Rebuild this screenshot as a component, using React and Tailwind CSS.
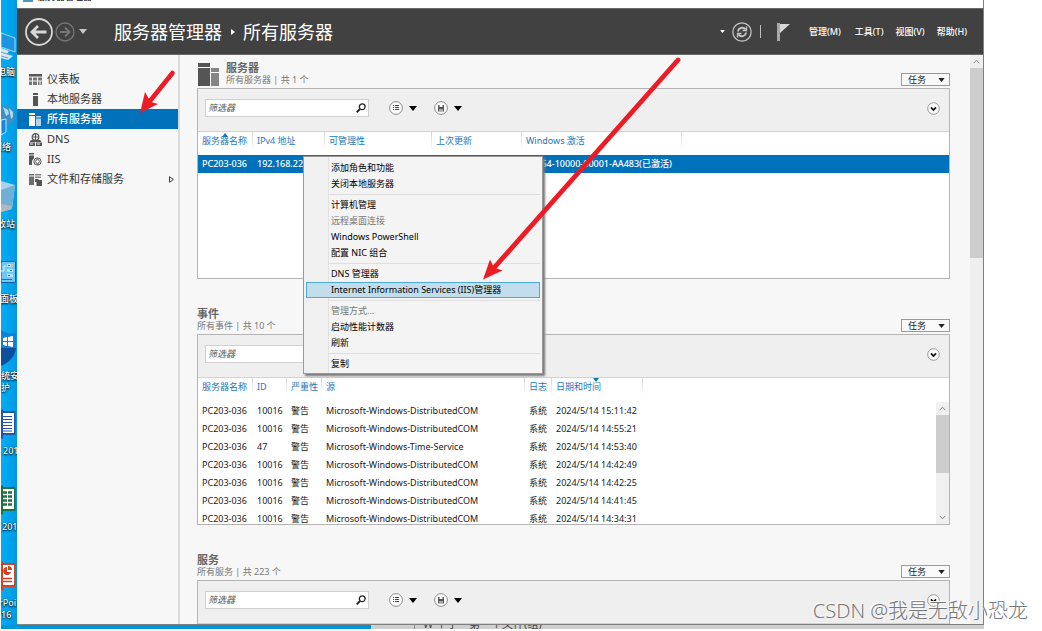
import React from "react";

const events = [
  ["10016", "Microsoft-Windows-DistributedCOM", "15:11:42"],
  ["10016", "Microsoft-Windows-DistributedCOM", "14:55:21"],
  ["47", "Microsoft-Windows-Time-Service", "14:53:40"],
  ["10016", "Microsoft-Windows-DistributedCOM", "14:42:49"],
  ["10016", "Microsoft-Windows-DistributedCOM", "14:42:25"],
  ["10016", "Microsoft-Windows-DistributedCOM", "14:41:45"],
  ["10016", "Microsoft-Windows-DistributedCOM", "14:34:31"],
];

function Caret({ className = "h-[5px] w-2" }) {
  return (
    <svg viewBox="0 0 8 5" className={className} fill="currentColor" aria-hidden="true">
      <path d="M0 0h8L4 5z" />
    </svg>
  );
}

/* ---------- desktop behind the window ---------- */

function DesktopLabel({ className, children }) {
  return (
    <span
      className={`absolute whitespace-nowrap text-[9px] leading-3 font-medium text-white [text-shadow:0_1px_2px_#000,0_0_1px_#000] ${className}`}
    >
      {children}
    </span>
  );
}

function OfficeIcon({ className, color, children }) {
  return (
    <svg viewBox="0 0 15 32" className={`absolute left-0 h-8 w-[15px] ${className}`} aria-hidden="true">
      <path d="M0 3h13.500a1 1 0 0 1 1 1v22a1 1 0 0 1-1 1H0z" fill={color} />
      <path d="M2 5h11v20H2z" fill="#fff" />
      {children}
      <path d="M0 2l2-1v30l-2-1z" fill={color} />
    </svg>
  );
}

function Desktop() {
  return (
    <aside className="relative w-4 shrink-0 overflow-hidden bg-[#00a8f3] bg-linear-to-r from-[#00aef8] to-[#0298e0]">
      <svg viewBox="0 0 15 32" className="absolute top-[31px] left-0 h-8 w-[15px]" aria-hidden="true">
        <path d="M0 2l14 5v14L0 16z" fill="#1b94e4" stroke="#9fdcff" />
        <path d="M0 17l8 3-2 3 6 2-5 4-7-2z" fill="#d6e6ee" />
        <path d="M0 21l9 3M0 25l7 2" stroke="#6fa2c0" />
      </svg>
      <DesktopLabel className="right-[2px] top-[66px]">此电脑</DesktopLabel>
      <svg viewBox="0 0 15 32" className="absolute top-[104px] left-0 h-8 w-[15px]" aria-hidden="true">
        <circle cx="4" cy="12" r="10" fill="#3d8fc4" />
        <path d="M2 3l5 3 1 4-3 2M8 4l4 4v5l-2 2z" fill="#a9dcf2" />
        <path d="M0 16l5-1v13l-5 3z" fill="#1788de" stroke="#b5e4ff" />
      </svg>
      <DesktopLabel className="right-[6px] top-[141px]">网络</DesktopLabel>
      <svg viewBox="0 0 15 32" className="absolute top-[181px] left-0 h-8 w-[15px]" aria-hidden="true">
        <path d="M0 0l14 4-3 24-11 3z" fill="#a5d6ee" />
        <path d="M0 9l14-5-3 24-11 3z" fill="#6fb0d4" />
        <path d="M0 23l11 2-1 3-10 3z" fill="#b4b9bd" />
      </svg>
      <DesktopLabel className="right-[2px] top-[218px]">回收站</DesktopLabel>
      <svg viewBox="0 0 15 23" className="absolute top-[261px] left-0 h-[23px] w-[15px]" aria-hidden="true">
        <path d="M0 .5h14.500v21H0z" fill="#6cc8f8" stroke="#0d5f9f" />
        <path d="M0 10h3V5h2" stroke="#d9f3ff" fill="none" />
        <path d="M6 3h6v3H6zM6 8h6v3H6zM6 13h6v3H6z" fill="#b9e5fb" />
        <path d="M7 4.500h2M9 9.500h2M7 14.500h2M0 18.500h11" stroke="#1b75b8" />
        <path d="M10 3.500h2v2h-2z" fill="#f5a95b" />
      </svg>
      <DesktopLabel className="-right-[1px] top-[293px]">控制面板</DesktopLabel>
      <svg viewBox="0 0 15 36" className="absolute top-[330px] left-0 h-9 w-[15px]" aria-hidden="true">
        <path d="M0 0c4 3 9 4 15 3v15H0z" fill="#0f80d8" />
        <path d="M0 18h15c-1 8-6 14-15 18z" fill="#0c4f9d" />
        <path d="M2 8l4-1v4H2zM7 7l5-1v5H7zM2 12h4v4l-4-1zM7 12h5v5l-5-1z" fill="#fff" />
      </svg>
      <DesktopLabel className="left-0 top-[370px]">统安</DesktopLabel>
      <DesktopLabel className="left-0 top-[382px]">护</DesktopLabel>
      <OfficeIcon className="top-[408px]" color="#2455a4">
        <path d="M2 8.500h9M2 11.500h9M2 14.500h9M2 17.500h9M2 20.500h9M2 23h9" stroke="#2455a4" />
      </OfficeIcon>
      <DesktopLabel className="left-[2px] top-[445px]">2016</DesktopLabel>
      <OfficeIcon className="top-[484px]" color="#1d7044">
        <path d="M2 8.500h4M2 12.500h4M2 16.500h4M2 20.500h4M7 8.500h4M7 12.500h4M7 16.500h4M7 20.500h4" stroke="#1d7044" strokeWidth="2.500" />
      </OfficeIcon>
      <DesktopLabel className="left-[1px] top-[521px]">2016</DesktopLabel>
      <OfficeIcon className="top-[560px]" color="#d04425">
        <path d="M6 7v5h4a4 4 0 1 1-4-5zM7 6a4 4 0 0 1 4 4H7z" fill="#d04425" />
        <path d="M2 18.500h9M2 21.500h9" stroke="#d04425" strokeWidth="1.500" />
      </OfficeIcon>
      <DesktopLabel className="-left-[2px] top-[597px]">rPoint</DesktopLabel>
      <DesktopLabel className="left-0 top-[609px]">16</DesktopLabel>
    </aside>
  );
}

/* ---------- window header ---------- */

function Header() {
  return (
    <header className="flex h-[47px] shrink-0 items-center border-y border-[#6a6a6a] bg-[#414141] pr-4 pl-2 text-white">
      <button type="button" aria-label="后退">
        <svg viewBox="0 0 28 28" className="size-7" fill="none" stroke="#d8d8d8" aria-hidden="true">
          <circle cx="14" cy="14" r="13" strokeWidth="1.800" />
          <path d="M21.500 14H7.500M13 8l-6 6 6 6" strokeWidth="2.800" />
        </svg>
      </button>
      <button type="button" aria-label="前进" className="ml-[2px]">
        <svg viewBox="0 0 20 20" className="size-5" fill="none" stroke="#757575" aria-hidden="true">
          <circle cx="10" cy="10" r="9" strokeWidth="1.400" />
          <path d="M5 10h9M10 5.500l4.500 4.500-4.500 4.500" strokeWidth="2" />
        </svg>
      </button>
      <button type="button" aria-label="历史记录" className="ml-1 text-[#c8c8c8]">
        <Caret />
      </button>
      <h1 className="ml-[27px] flex items-center text-[18px] leading-6">
        <span>服务器管理器</span>
        <svg viewBox="0 0 4 6" className="mr-2 ml-[9px] h-[6px] w-1" fill="#fff" aria-hidden="true">
          <path d="M0 0l4 3-4 3z" />
        </svg>
        <span>所有服务器</span>
      </h1>
      <div className="ml-auto flex items-center">
        <button type="button" aria-label="更多">
          <Caret className="h-[3px] w-[5px]" />
        </button>
        <button type="button" aria-label="刷新" className="ml-[7px]">
          <svg viewBox="0 0 20 20" className="size-5" fill="none" stroke="#c6c6c6" aria-hidden="true">
            <circle cx="10" cy="10" r="9.200" strokeWidth="1.200" />
            <path d="M6 9.500c.5-4 5.500-5 7.500-2M14 10.500c-.5 4-5.500 5-7.500 2" strokeWidth="1.800" />
            <path d="M14.500 4.500v4h-4M5.500 15.500v-4h4" strokeWidth="1.300" />
          </svg>
        </button>
        <span className="ml-2 h-[13px] w-px bg-[#bdbdbd]" />
        <button type="button" aria-label="通知" className="mr-[19px] ml-4">
          <svg viewBox="0 0 13 18" className="h-[18px] w-[13px]" aria-hidden="true">
            <path d="M0 0h3v18H0z" fill="#a9a9a9" />
            <path d="M3 1h10L3 10z" fill="#d9d9d9" />
          </svg>
        </button>
        <nav className="flex gap-3 text-[9px] leading-3 font-medium">
          <button type="button" className="mr-[2px]">管理(M)</button>
          <button type="button">工具(T)</button>
          <button type="button">视图(V)</button>
          <button type="button">帮助(H)</button>
        </nav>
      </div>
    </header>
  );
}

/* ---------- sidebar ---------- */

const navIcons = {
  dashboard: (
    <>
      <path d="M0 1h13v2.500H0z" />
      <path d="M0 4.500h3v3H0zM4 4.500h4v3H4zM9 4.500h4v3H9zM0 8.500h3V12H0zM4 8.500h4V12H4zM9 8.500h1.500V12H9zM11.500 8.500H13V12h-1.500z" opacity=".8" />
    </>
  ),
  local: <path d="M4 0h5v2H4zM4 3h5v10H4z" />,
  all: (
    <>
      <path d="M0 0h6v2H0zM0 3h6v10H0z" />
      <path d="M7 3h5v1.500H7zM7 5.500h5V13H7z" opacity=".7" />
    </>
  ),
  dns: (
    <>
      <circle cx="6.500" cy="4" r="3.300" fill="none" stroke="currentColor" strokeWidth="1.300" />
      <path d="M4 4h5M6.500 1v6" stroke="currentColor" />
      <path d="M1 8l1-1h9l1 1v1H1zM0 9.500h6V13H0zM7 9.500h6V13H7z" />
      <path d="M1 11h3M8 11h3" stroke="#f7f7f7" />
    </>
  ),
  iis: (
    <>
      <path d="M0 0h5v1.500H0zM0 2.500h5v2.500L3 8v4H0z" />
      <circle cx="8.500" cy="8.500" r="3.600" fill="#f7f7f7" stroke="currentColor" />
      <path d="M8.500 5.500l2 3-2 3-2-3z" fill="none" stroke="currentColor" />
    </>
  ),
  files: (
    <>
      <path d="M0 1h5v1.500H0zM0 3.500h5V12H0z" opacity=".85" />
      <path d="M6 1h6v1.500H6zM6 3.500h6V5H6z" opacity=".7" />
      <path d="M6 6h3l1 1h3v6H7.500V9H6z" />
    </>
  ),
};

const navItems = [
  ["dashboard", "仪表板"],
  ["local", "本地服务器"],
  ["all", "所有服务器"],
  ["dns", "DNS"],
  ["iis", "IIS"],
  ["files", "文件和存储服务"],
];

function Sidebar() {
  return (
    <nav className="w-[163px] shrink-0 border-r-2 border-[#dadada] pt-[14px]">
      <ul>
        {navItems.map(([id, label]) => (
          <li key={id}>
            <a
              href={`#${id}`}
              aria-current={id === "all" ? "page" : undefined}
              className={
                id === "all"
                  ? "flex h-5 items-center bg-[#0072bc] pr-1 pl-3 text-[11px] leading-4 font-medium text-white"
                  : "flex h-5 items-center pr-1 pl-3 text-[11px] leading-4 text-[#333]"
              }
            >
              <svg
                viewBox="0 0 13 13"
                className={id === "all" ? "mr-[5px] size-[13px]" : "mr-[5px] size-[13px] text-[#555]"}
                fill="currentColor"
                aria-hidden="true"
              >
                {navIcons[id]}
              </svg>
              {label}
              {id === "files" && (
                <svg viewBox="0 0 5 7" className="ml-auto h-[7px] w-[5px]" fill="none" stroke="#444" aria-hidden="true">
                  <path d="M.5 .7v5.600L4.400 3.500z" />
                </svg>
              )}
            </a>
          </li>
        ))}
      </ul>
    </nav>
  );
}

/* ---------- panels ---------- */

function Toolbar({ id }) {
  return (
    <div className="flex h-[43px] shrink-0 items-start border-b border-[#d2d2d2] bg-[#efefef] pt-[10px] pr-[9px] pl-[7px]">
      <label htmlFor={id} className="sr-only">
        筛选器
      </label>
      <div className="flex h-[18px] w-[164px] items-center border border-[#d0d0d0] bg-white pr-[2px] pl-[2px]">
        <input
          id={id}
          type="text"
          placeholder="筛选器"
          className="min-w-0 flex-1 bg-transparent text-[9px] leading-3 italic outline-none placeholder:text-[#555]"
        />
        <button type="button" aria-label="搜索">
          <svg viewBox="0 0 10 10" className="size-[10px]" fill="none" stroke="#222" aria-hidden="true">
            <circle cx="6.200" cy="3.800" r="2.900" strokeWidth="1.300" />
            <path d="M4 6L.7 9.300" strokeWidth="1.800" />
          </svg>
        </button>
      </div>
      <button type="button" aria-label="筛选条件" className="ml-5 flex h-[18px] items-center gap-[6px] text-black">
        <svg viewBox="0 0 14 14" className="size-[14px]" fill="#fafafa" stroke="#8c8c8c" aria-hidden="true">
          <circle cx="7" cy="7" r="6.400" />
          <path d="M4 4.500h1M4 6.500h1M4 8.500h1M6 4.500h4M6 6.500h4M6 8.500h4" stroke="#444" strokeWidth="1" />
        </svg>
        <Caret className="h-[5px] w-2" />
      </button>
      <button type="button" aria-label="保存查询" className="ml-[17px] flex h-[18px] items-center gap-[6px] text-black">
        <svg viewBox="0 0 14 14" className="size-[14px]" fill="#fafafa" stroke="#8c8c8c" aria-hidden="true">
          <circle cx="7" cy="7" r="6.400" />
          <path d="M4 4h6v6.500H4z" fill="#555" stroke="none" />
          <path d="M5.500 4h3v2h-3zM5.500 8h1v2.500h-1zM7.500 8h1v2.500h-1z" fill="#fff" stroke="none" />
        </svg>
        <Caret className="h-[5px] w-2" />
      </button>
      <button type="button" aria-label="展开" className="ml-auto flex h-[18px] items-center">
        <svg viewBox="0 0 13 13" className="size-[13px]" fill="#fafafa" stroke="#999" aria-hidden="true">
          <circle cx="6.500" cy="6.500" r="5.800" />
          <path d="M4 5.300l2.500 2.700L9 5.300" fill="none" stroke="#111" strokeWidth="1.700" />
        </svg>
      </button>
    </div>
  );
}

function Section({ id, title, subtitle, icon, children }) {
  return (
    <section>
      <div className="flex h-[27px] items-end pb-[2px]">
        {icon}
        <div className="text-[9px] leading-3 text-[#777]">
          <h2 className="text-[11px] leading-[13px] font-bold text-[#666]">{title}</h2>
          <p>{subtitle}</p>
        </div>
        <button
          type="button"
          className="ml-auto flex h-[13px] w-[49px] items-center justify-between border border-[#9a9a9a] bg-[#f9f9f9] pr-1 pl-[6px] text-[9px] leading-3 text-[#222]"
        >
          任务
          <Caret className="h-1 w-[7px]" />
        </button>
      </div>
      <div className="flex h-[191px] flex-col overflow-hidden border border-[#b4b4b4] bg-white">
        <Toolbar id={id} />
        {children}
      </div>
    </section>
  );
}

function Th({ children, sort }) {
  return (
    <th
      scope="col"
      className="bg-[linear-gradient(#d4d4d4,#ffffff)] bg-[length:1px_18px] bg-right-top bg-no-repeat pl-[4px] text-left font-normal"
    >
      <span className="relative">
        {children}
        {sort === "up" && (
          <svg viewBox="0 0 6 4" className="absolute -top-[1px] left-1/2 -ml-[3px] h-1 w-[6px]" fill="#1273b8" aria-hidden="true">
            <path d="M0 4h6L3 0z" />
          </svg>
        )}
        {sort === "down" && (
          <svg viewBox="0 0 6 4" className="absolute -top-[2px] right-[2px] h-1 w-[6px]" fill="#1273b8" aria-hidden="true">
            <path d="M0 0h6L3 4z" />
          </svg>
        )}
      </span>
    </th>
  );
}

function ServerTable() {
  return (
    <table className="w-full table-fixed border-collapse text-[9px] leading-3 whitespace-nowrap">
      <colgroup>
        <col className="w-[55px]" />
        <col className="w-[72px]" />
        <col className="w-[107px]" />
        <col className="w-[90px]" />
        <col className="w-[160px]" />
        <col />
      </colgroup>
      <thead>
        <tr className="h-[18px] text-[#2378bd]">
          <Th sort="up">服务器名称</Th>
          <Th>IPv4 地址</Th>
          <Th>可管理性</Th>
          <Th>上次更新</Th>
          <Th>Windows 激活</Th>
          <td />
        </tr>
        <tr className="h-[5px]" aria-hidden="true" />
      </thead>
      <tbody>
        <tr className="h-[18px] bg-[#0072bc] font-medium text-white">
          <td className="pl-1">PC203-036</td>
          <td className="pl-1">192.168.22</td>
          <td />
          <td />
          <td className="pl-1">00354-10000-00001-AA483(已激活)</td>
          <td />
        </tr>
      </tbody>
    </table>
  );
}

function Chevron({ down }) {
  return (
    <svg viewBox="0 0 7 5" className="h-[5px] w-[7px]" fill="none" stroke="#8a8a8a" aria-hidden="true">
      <path d={down ? "M.7 .8l2.800 3 2.800-3" : "M.7 4.200l2.800-3 2.800 3"} />
    </svg>
  );
}

function EventTable() {
  return (
    <div className="relative">
      <table className="w-full table-fixed border-collapse text-[9px] leading-3 whitespace-nowrap">
        <colgroup>
          <col className="w-[55px]" />
          <col className="w-[34px]" />
          <col className="w-[35px]" />
          <col className="w-[203px]" />
          <col className="w-[27px]" />
          <col className="w-[91px]" />
          <col />
        </colgroup>
        <thead>
          <tr className="h-[18px] text-[#2378bd]">
            <Th>服务器名称</Th>
            <Th>ID</Th>
            <Th>严重性</Th>
            <Th>源</Th>
            <Th>日志</Th>
            <Th sort="down">日期和时间</Th>
            <td />
          </tr>
          <tr className="h-[6px]" aria-hidden="true" />
        </thead>
        <tbody className="text-[#1a1a1a]">
          {events.map(([id, source, time]) => (
            <tr key={time} className="h-[18px]">
              <td className="pl-1">PC203-036</td>
              <td className="pl-1">{id}</td>
              <td className="pl-1">警告</td>
              <td className="pl-1">{source}</td>
              <td className="pl-1">系统</td>
              <td className="pl-1">2024/5/14 {time}</td>
              <td />
            </tr>
          ))}
        </tbody>
      </table>
      <div className="absolute top-6 right-0 flex h-[122px] w-[13px] flex-col items-center bg-[#f0f0f0]">
        <span className="flex h-[13px] items-center">
          <Chevron />
        </span>
        <span className="h-[58px] w-full bg-[#cdcdcd]" />
        <span className="mt-auto flex h-[13px] items-center">
          <Chevron down />
        </span>
      </div>
    </div>
  );
}

/* ---------- context menu ---------- */

const menuGroups = [
  ["添加角色和功能", "关闭本地服务器"],
  ["计算机管理", "远程桌面连接", "Windows PowerShell", "配置 NIC 组合"],
  ["DNS 管理器", "Internet Information Services (IIS)管理器"],
  ["管理方式...", "启动性能计数器", "刷新"],
  ["复制"],
];
const disabledItems = ["远程桌面连接", "管理方式..."];

function ContextMenu() {
  return (
    <div
      role="menu"
      className="absolute top-[156px] left-[303px] w-[240px] border border-[#9a9a9a] bg-[#f4f4f4] bg-[linear-gradient(90deg,#f0f0f0_24px,#e2e2e2_24px,#e2e2e2_25px,transparent_25px)] px-[2px] pt-[3px] pb-[1px] text-[9px] leading-3 shadow-[2px_2px_2px_#777]"
    >
      {menuGroups.map((group, index) => (
        <div key={group[0]} role="group">
          {index > 0 && <div className="my-[2px] ml-[22px] h-px bg-[#dedede]" />}
          {group.map((item) => (
            <button
              key={item}
              type="button"
              role="menuitem"
              disabled={disabledItems.includes(item)}
              className={
                item.startsWith("Internet")
                  ? "flex h-4 w-full items-center bg-[#c2deec] pl-[25px] whitespace-nowrap text-black outline outline-[#4ba9dc] -outline-offset-1"
                  : "flex h-4 w-full items-center pl-[25px] whitespace-nowrap text-black disabled:text-[#777]"
              }
            >
              {item}
            </button>
          ))}
        </div>
      ))}
    </div>
  );
}

function Arrows() {
  return (
    <svg className="pointer-events-none absolute top-0 left-0 h-full w-full" aria-hidden="true">
      <g fill="#ed1c24" stroke="#ed1c24" strokeLinecap="round">
        <path d="M172.500 73L150 101" strokeWidth="4.600" />
        <path d="M140 113l5-21 4 7 2 3 7 2z" stroke="none" />
        <path d="M678 60L493 269" strokeWidth="4.800" />
        <path d="M483 279.500l7-20 4 8 8.500 3z" stroke="none" />
      </g>
    </svg>
  );
}

const servers = (
  <svg viewBox="0 0 21 23" className="mr-[7px] ml-[1px] h-[23px] w-[21px]" aria-hidden="true">
    <path d="M0 0h12v4H0zM0 5h12v18H0z" fill="#555" />
    <path d="M13 5h8v4h-8zM13 10h8v13h-8z" fill="#858585" />
  </svg>
);

export default function App() {
  return (
    <div
      lang="zh-CN"
      className="relative flex h-screen flex-col overflow-hidden bg-white pr-[58px] pb-[2px] pl-px font-['Noto_Sans','Noto_Sans_CJK_SC',sans-serif]"
    >
      <div className="flex min-h-0 flex-1">
        <Desktop />
        <div className="flex min-w-0 flex-1 flex-col">
          <div className="flex min-h-0 flex-1 flex-col overflow-hidden border-r border-b border-[#808080] bg-[#f7f7f7]">
            <div className="flex h-2 shrink-0 items-start overflow-hidden bg-white pl-[6px] text-[9px] leading-3 text-black">
              <span className="mr-[5px] h-[2px] w-[10px] bg-[#4b9ac6]" />
              <span className="-mt-[9px]">服务器管理器</span>
            </div>
            <Header />
            <div className="flex min-h-0 flex-1">
              <Sidebar />
              <main className="flex min-w-0 flex-1 flex-col gap-7 overflow-hidden pt-[6px] pr-5 pl-[17px]">
                <Section id="filter-servers" title="服务器" subtitle="所有服务器 | 共 1 个" icon={servers}>
                  <ServerTable />
                </Section>
                <Section id="filter-events" title="事件" subtitle="所有事件 | 共 10 个">
                  <EventTable />
                </Section>
                <Section id="filter-services" title="服务" subtitle="所有服务 | 共 223 个" />
              </main>
              <div className="flex w-[13px] shrink-0 flex-col items-center bg-[#efefef]">
                <span className="flex h-[13px] items-center">
                  <Chevron />
                </span>
                <span className="h-[190px] w-full bg-[#cdcdcd]" />
              </div>
            </div>
          </div>
        </div>
      </div>
      <div className="flex h-1 shrink-0 overflow-hidden">
        <div className="w-[370px] bg-[#0095d6]" />
        <div className="w-11 border-r border-[#888] bg-[#cfcfcf]" />
        <div className="flex flex-1 items-start bg-[#cfcfcf] pl-2 text-[11px] leading-3 text-[#444]">
          <span className="-mt-[7px]">W 个字　第一个文件(组)</span>
        </div>
      </div>
      <ContextMenu />
      <Arrows />
      <p className="absolute right-[14px] bottom-[6px] text-[20px] leading-7 font-light whitespace-nowrap text-[#777] [text-shadow:-1px_-1px_0_#fff]">
        CSDN @我是无敌小恐龙
      </p>
    </div>
  );
}
